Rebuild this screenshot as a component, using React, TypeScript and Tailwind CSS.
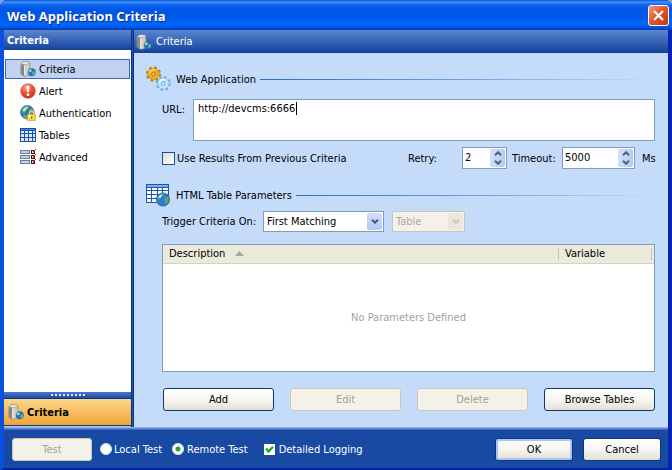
import { useState } from "react";
import type { ReactNode } from "react";
import clsx from "clsx";

/* ---------- icons ---------- */

function ServerIcon({ className }: { className?: string }) {
  return (
    <svg viewBox="0 0 16 16" className={className} aria-hidden="true">
      <path d="M.8 3 3 .8 8.600.5 10 2v12L4.500 15.500.8 13.200z" fill="#a3a29e" stroke="#77787a" strokeWidth=".5" />
      <path d="M1.200 3.500 4 4v11L1.200 13z" fill="#85868a" />
      <path d="M4.200 3.800 9.400 3v11l-5.200 1.200z" fill="#cfcdc6" />
      <path d="M1.600 3 3.500 1.300l4.900-.3 1 1.200-5.200.900z" fill="#f3f2ee" />
      <path d="M4.800 4.500v9.500" stroke="#f6f5f0" strokeWidth="1" />
      <circle cx="11.800" cy="11.300" r="3.700" fill="#2573bd" stroke="#1d5793" strokeWidth=".5" />
      <path d="M10 8.300c1.500-.5 2.300.2 1.600 1.200s-1.100 1-1.900 2.300L8.300 11c.1-1.300.7-2.200 1.700-2.700zM13 10.300l1.900.1c.5 1.700-.1 3.100-1.300 3.900-1-.4-1.600-1.300-1.300-2.300z" fill="#4fc08b" />
      <circle cx="10.500" cy="9.800" r="1.100" fill="#b5e8f5" />
    </svg>
  );
}

function AlertIcon() {
  return (
    <svg viewBox="0 0 16 16" className="size-4" aria-hidden="true">
      <defs>
        <radialGradient id="alert" cx=".4" cy=".25" r=".8">
          <stop offset="0" stopColor="#ffa88e" />
          <stop offset=".45" stopColor="#f05a38" />
          <stop offset="1" stopColor="#c9230d" />
        </radialGradient>
      </defs>
      <circle cx="8" cy="8" r="7.300" fill="url(#alert)" stroke="#d5583f" strokeWidth=".7" />
      <path d="M6.500 2.800h3L9 9.300H7z" fill="#fff" />
      <circle cx="8" cy="11.800" r="1.400" fill="#fff" />
    </svg>
  );
}

function AuthIcon() {
  return (
    <svg viewBox="0 0 16 16" className="size-4" aria-hidden="true">
      <circle cx="7.300" cy="7.300" r="6.800" fill="#2c74bd" stroke="#3b6d9f" strokeWidth=".7" />
      <path d="M3 3c2-2 4-2.300 6-1.600L8.300 3.500 5.600 5.500 5 8 2 7.500C1.400 6 2 4 3 3zM9 5l3-1.800c1.500 1.300 2 3 1.900 4.800L10 8.500zM4 10l3 .5.500 3c-2 0-3.500-1-4.500-2.300z" fill="#69b65c" />
      <path d="M2.500 5.500c1-2.300 3-3.500 5.500-3.500L5 6z" fill="#c9ecf7" />
      <path d="M9.300 9.500V8.200c0-2.800 4.400-2.800 4.400 0v1.300" fill="none" stroke="#d9d089" strokeWidth="1.300" />
      <path d="M7.600 9.300h7.800v6.200H7.600z" fill="#f6d743" stroke="#c7a32b" strokeWidth=".7" />
      <path d="M8.300 10h3v2.500h-3z" fill="#fff3a5" />
      <path d="M11 11.300h1.200v2.400H11z" fill="#8a6a12" />
    </svg>
  );
}

function TableIcon() {
  return (
    <svg viewBox="0 0 16 16" className="size-4" shapeRendering="crispEdges" aria-hidden="true">
      <path d="M0 1h16v14H0z" fill="#1d4fa5" />
      <path d="M1 2h14v1H1z" fill="#4d87dd" />
      <path d="M1 4h3v2H1zm4 0h3v2H5zm4 0h3v2H9zm4 0h2v2h-2zM1 7h3v3H1zm4 0h3v3H5zm4 0h3v3H9zm4 0h2v3h-2zM1 11h3v3H1zm4 0h3v3H5zm4 0h3v3H9zm4 0h2v3h-2z" fill="#d8e9fb" />
    </svg>
  );
}

function AdvancedIcon() {
  return (
    <svg viewBox="0 0 16 16" className="size-4" shapeRendering="crispEdges" aria-hidden="true">
      <path d="M0 1h10v4H0zm0 5h10v4H0zm0 5h10v4H0z" fill="#6d7f9e" />
      <path d="M1 2h8v2H1zm0 5h8v2H1zm0 5h8v2H1z" fill="#c3cfe2" />
      <path d="M11 1h4v4h-4zm0 5h4v4h-4zm0 5h4v4h-4z" fill="#37201d" />
      <path d="M12 2h2v2h-2zm0 5h2v2h-2zm0 5h2v2h-2z" fill="#f4cfc6" />
      <path d="M15 0h1v1h-1zm-1 1h1v1h-1zm-1 1h1v1h-1zm2 3h1v1h-1zm-1 1h1v1h-1zm-1 1h1v2h-1zm2 3h1v1h-1zm-1 1h1v1h-1zm-1 1h1v2h-1z" fill="#d9371f" />
    </svg>
  );
}

function GearsIcon() {
  return (
    <svg viewBox="0 0 26 26" className="size-[26px]" aria-hidden="true">
      <circle cx="7.500" cy="8" r="6.500" fill="none" stroke="#b9800f" strokeWidth="2.200" strokeDasharray="2.550 2.555" />
      <circle cx="7.500" cy="8" r="5.800" fill="#efab1e" stroke="#c2850f" strokeWidth=".6" />
      <path d="M3.500 7.500a4.300 4.300 0 0 1 6-3.500" fill="none" stroke="#ffdc7c" strokeWidth="1.300" />
      <circle cx="7.500" cy="8" r="1.700" fill="#dce6f2" stroke="#a8700c" />
      <circle cx="17.300" cy="17.500" r="6.400" fill="none" stroke="#6aaeea" strokeWidth="2.200" strokeDasharray="2.500 2.526" />
      <circle cx="17.300" cy="17.500" r="5.700" fill="#bfe3fc" stroke="#74b4ea" strokeWidth=".6" />
      <path d="M13.500 17a4 4 0 0 1 5.500-3.300" fill="none" stroke="#f3fbff" strokeWidth="1.300" />
      <circle cx="17.300" cy="17.500" r="1.700" fill="#e6f3ff" stroke="#5b9edb" />
    </svg>
  );
}

function WebTableIcon() {
  return (
    <svg viewBox="0 0 26 26" className="size-[26px]" aria-hidden="true">
      <g shapeRendering="crispEdges">
        <path d="M0 2h23v19H0z" fill="#1f56a9" />
        <path d="M1 3h21v2H1z" fill="#79aeea" />
        <path d="M1 6h4v2H1zm5 0h5v2H6zm6 0h4v2h-4zm5 0h5v2h-5zM1 9h4v3H1zm5 0h5v3H6zm6 0h4v3h-4zm5 0h5v3h-5zM1 13h4v3H1zm5 0h5v3H6zm6 0h4v3h-4zM1 17h4v3H1zm5 0h5v3H6z" fill="#f5faff" />
      </g>
      <circle cx="17" cy="17.500" r="6.600" fill="#2e7bd3" stroke="#2a5fa5" strokeWidth=".8" />
      <path d="M13 13.500c1.500-1.800 3.500-2.200 5-1.700l-1 2.200-2.500 1.500-.5 2.500-2.500-1c0-1.500.5-2.500 1.500-3.500zM18.500 15.500l3.500-.5c1 1.500 1 3 .3 4.800L20 22l-1.500-2.500z" fill="#58a86a" />
      <path d="M12 15.500c.8-2 2.500-3 4.500-3l-2 3.500z" fill="#bfe6f8" />
    </svg>
  );
}

function Chevron({ up }: { up?: boolean }) {
  return (
    <svg viewBox="0 0 8 5" className="h-[5px] w-2" aria-hidden="true">
      <path d={up ? "M1 4.200 4 1.300l3 2.900" : "M1 .8l3 2.900L7 .8"} fill="none" stroke="currentColor" strokeWidth="2" />
    </svg>
  );
}

/* ---------- controls ---------- */

interface ButtonProps {
  children: ReactNode;
  disabled?: boolean;
  isDefault?: boolean;
  className?: string;
}

function Button({ children, disabled, isDefault, className }: ButtonProps) {
  return (
    <button
      type="button"
      disabled={disabled}
      className={clsx(
        "h-[23px] rounded-[3px] border text-center",
        disabled
          ? "border-[#cbc8ba] bg-[#f4f2e8] text-[#a3a192]"
          : "border-[#0c3a70] bg-linear-to-b from-white via-[#f6f5f1] to-[#e3e0d6] text-black",
        isDefault && "shadow-[inset_0_0_0_2px_#a9c6f5]",
        className,
      )}
    >
      {children}
    </button>
  );
}

function SectionTitle({ icon, children }: { icon: ReactNode; children: ReactNode }) {
  return (
    <div className="flex h-[26px] items-center">
      {icon}
      <h2 className="ml-1">{children}</h2>
      <div className="ml-1 h-px flex-1 bg-linear-to-r from-[#2f6cc4] via-[#6d9ddd] to-[#c5dbfa]" />
    </div>
  );
}

function Spinner({ id, value, className }: { id: string; value: number; className?: string }) {
  const [current, setCurrent] = useState(value);
  const step = "flex h-[9px] w-full items-center justify-center";
  return (
    <div className={clsx("flex h-[22px] border border-[#7f9db9] bg-white p-px", className)}>
      <input
        id={id}
        type="text"
        inputMode="numeric"
        value={current}
        onChange={(e) => setCurrent(Number(e.target.value) || 0)}
        className="min-w-0 flex-1 pb-[2px] pl-px outline-none"
      />
      <div className="w-[15px] rounded-xs bg-linear-to-r from-[#d3e0fb] to-[#b5c9f3] text-[#4d6185]">
        <button type="button" aria-label="Increase" className={step} onClick={() => setCurrent(current + 1)}>
          <Chevron up />
        </button>
        <button type="button" aria-label="Decrease" className={step} onClick={() => setCurrent(current - 1)}>
          <Chevron />
        </button>
      </div>
    </div>
  );
}

interface SelectProps {
  label: string;
  id?: string;
  options: string[];
  disabled?: boolean;
  className?: string;
}

function Select({ label, id, options, disabled, className }: SelectProps) {
  return (
    <div className={clsx("relative h-[21px]", className)}>
      <select
        id={id}
        aria-label={label}
        disabled={disabled}
        className={clsx(
          "size-full appearance-none border pl-[3px] opacity-100 outline-none",
          disabled ? "border-[#c9c7ba] bg-[#f4f2e8] text-[#aca899]" : "border-[#7f9db9] bg-white text-black",
        )}
      >
        {options.map((o) => (
          <option key={o}>{o}</option>
        ))}
      </select>
      <span
        className={clsx(
          "pointer-events-none absolute inset-y-[2px] right-[2px] flex w-[15px] items-center justify-center rounded-xs",
          disabled ? "bg-[#eae8dc] text-[#c5c3b5]" : "bg-linear-to-b from-[#cfddfb] to-[#b3c8f4] text-[#3f567f]",
        )}
      >
        <Chevron />
      </span>
    </div>
  );
}

/* ---------- page ---------- */

const NAV = [
  { label: "Criteria", icon: <ServerIcon className="size-4" /> },
  { label: "Alert", icon: <AlertIcon /> },
  { label: "Authentication", icon: <AuthIcon /> },
  { label: "Tables", icon: <TableIcon /> },
  { label: "Advanced", icon: <AdvancedIcon /> },
];

function TitleBar() {
  return (
    <header className="flex h-[30px] items-center justify-between bg-[linear-gradient(#0a4fd0_0,#3f93ff_2px,#0b62ee_5px,#0055e5_9px,#0058ea_16px,#0166fb_25px,#0050d8_28px,#0a34a6_30px)] pr-[3px] pl-[7px]">
      <h1 className="pt-[2px] font-['Open_Sans',sans-serif] text-[13px] font-bold text-white [text-shadow:1px_1px_#0a2f8c]">
        Web Application Criteria
      </h1>
      <button
        type="button"
        aria-label="Close"
        className="flex size-[21px] items-center justify-center rounded-[3px] border border-white bg-linear-to-br from-[#f0977a] via-[#e0502c] to-[#c23a13]"
      >
        <svg viewBox="0 0 13 13" className="size-[13px]" aria-hidden="true">
          <path d="m2 2 9 9m0-9-9 9" stroke="#fff" strokeWidth="2.200" />
        </svg>
      </button>
    </header>
  );
}

function Sidebar() {
  const [active, setActive] = useState("Criteria");
  return (
    <aside className="flex w-[127px] flex-col">
      <h2 className="flex h-5 items-center bg-linear-to-b from-[#5b86d2] to-[#12429b] pl-[3px] font-bold text-white">
        Criteria
      </h2>
      <nav className="flex flex-1 flex-col gap-[2px] bg-white px-px pt-[9px]">
        {NAV.map((item) => (
          <button
            key={item.label}
            type="button"
            onClick={() => setActive(item.label)}
            className={clsx(
              "flex h-5 items-center gap-[3px] border pl-[14px]",
              active === item.label ? "border-[#3b66ba] bg-[#c2d2ee]" : "border-transparent",
            )}
          >
            {item.icon}
            {item.label}
          </button>
        ))}
      </nav>
      <div className="flex h-[7px] items-center justify-center gap-[2px] border-b border-[#0b3285] bg-linear-to-b from-[#4a78cb] to-[#1d4ca6]">
        {Array.from({ length: 9 }, (_, i) => (
          <span key={i} className="size-[2px] bg-[#dfe9fb]" />
        ))}
      </div>
      <button
        type="button"
        className="flex h-[26px] items-center gap-[3px] bg-linear-to-b from-[#fcd787] to-[#f0a32b] pl-1 font-bold"
      >
        <ServerIcon className="size-4" />
        Criteria
      </button>
      <div className="h-px bg-[#0b3285]" />
      <div className="h-px bg-[#a9c6f5]" />
    </aside>
  );
}

function CriteriaPanel() {
  return (
    <main className="flex min-w-0 flex-1 flex-col bg-[#c5dbfa]">
      <div className="flex h-[23px] items-center gap-1 bg-linear-to-b from-[#5b86d2] to-[#12429b] pl-[2px] text-white">
        <ServerIcon className="size-4" />
        Criteria
      </div>

      <div className="flex flex-1 flex-col pt-[13px] pr-[13px] pb-4 pl-3">
        <SectionTitle icon={<GearsIcon />}>Web Application</SectionTitle>

        <div className="mt-[7px] ml-4 flex">
          <label htmlFor="url" className="w-[31px] pt-1">URL:</label>
          <div className="relative h-[42px] flex-1">
            <textarea
              id="url"
              defaultValue="http://devcms:6666"
              className="block size-full resize-none border border-[#7f9db9] bg-white px-1 py-[2px] outline-none"
            />
            {/* text caret */}
            <span className="absolute top-[3px] left-[103px] h-[13px] w-px bg-black" />
          </div>
        </div>

        <div className="mt-[6px] ml-4 flex items-center">
          <label className="flex items-center gap-[2px]">
            <input
              type="checkbox"
              className="size-[13px] appearance-none border border-[#1c5180] bg-linear-to-br from-[#dcdcd7] to-white checked:bg-[#21a121]"
            />
            Use Results From Previous Criteria
          </label>
          <label htmlFor="retry" className="ml-auto w-[54px]">Retry:</label>
          <Spinner id="retry" value={2} className="w-[45px]" />
          <label htmlFor="timeout" className="ml-[5px] w-[50px]">Timeout:</label>
          <Spinner id="timeout" value={5000} className="w-[73px]" />
          <span className="w-5 pl-[7px]">Ms</span>
        </div>

        <div className="mt-[13px]">
          <SectionTitle icon={<WebTableIcon />}>HTML Table Parameters</SectionTitle>
        </div>

        <div className="mt-[3px] ml-4 flex items-center">
          <label htmlFor="trigger" className="w-[101px]">Trigger Criteria On:</label>
          <Select
            id="trigger"
            label="Trigger Criteria On"
            options={["First Matching", "All Matching"]}
            className="w-[121px]"
          />
          <Select label="Trigger target" options={["Table", "Row"]} disabled className="ml-2 w-[73px]" />
        </div>

        <div className="mt-3 ml-4 flex flex-1 flex-col border border-[#7f9db9] bg-white">
          <table className="w-full table-fixed">
            <thead>
              <tr className="h-[18px] border-b border-[#d6d2c2] bg-[#ebeadb]">
                <th className="pl-[6px] text-left font-normal">
                  <span className="flex items-center gap-[10px]">
                    Description
                    <svg viewBox="0 0 9 5" className="h-[5px] w-[9px]" aria-hidden="true">
                      <path d="M0 5 4.500 0 9 5z" fill="#aca899" />
                    </svg>
                  </span>
                </th>
                <th className="w-[96px] text-left font-normal">
                  <span className="mr-[2px] flex h-3 items-center border-x border-[#c7c5b2] pl-[6px]">Variable</span>
                </th>
              </tr>
            </thead>
          </table>
          <p className="flex flex-1 items-center justify-center text-[#9f9f9f]">No Parameters Defined</p>
        </div>

        <div className="mt-4 ml-[17px] flex justify-between">
          <Button className="w-[111px]">Add</Button>
          <Button className="w-[111px]" disabled>Edit</Button>
          <Button className="w-[111px]" disabled>Delete</Button>
          <Button className="w-[111px]">Browse Tables</Button>
        </div>
      </div>
    </main>
  );
}

function Footer() {
  const [mode, setMode] = useState("remote");
  const radio =
    "size-3 appearance-none rounded-full border border-[#d5e2f0] bg-white checked:bg-[radial-gradient(circle,#2f9e2f_0,#2f9e2f_2px,#fff_3px)]";
  return (
    <footer className="flex h-[38px] items-center bg-[#184aa3] pr-[7px] pl-2 text-white">
      <Button className="w-20" disabled>Test</Button>
      <label className="ml-2 flex items-center gap-[2px]">
        <input type="radio" name="mode" className={radio} checked={mode === "local"} onChange={() => setMode("local")} />
        Local Test
      </label>
      <label className="ml-[10px] flex items-center gap-[3px]">
        <input type="radio" name="mode" className={radio} checked={mode === "remote"} onChange={() => setMode("remote")} />
        Remote Test
      </label>
      <label className="ml-4 flex items-center gap-1">
        <span className="relative size-[11px]">
          <input type="checkbox" defaultChecked className="peer block size-full appearance-none bg-white" />
          <svg
            viewBox="0 0 11 11"
            className="pointer-events-none absolute inset-0 hidden peer-checked:block"
            aria-hidden="true"
          >
            <path d="m2 4.500 2.500 3L9 2.800" fill="none" stroke="#21a121" strokeWidth="2.200" />
          </svg>
        </span>
        Detailed Logging
      </label>
      <Button className="ml-auto w-[78px]" isDefault>OK</Button>
      <Button className="ml-[10px] w-[78px]">Cancel</Button>
    </footer>
  );
}

export default function App() {
  return (
    <div className="min-h-screen bg-[#8f9fdc] font-['DejaVu_Sans_Condensed','DejaVu_Sans',sans-serif] text-[11px] leading-[13px] text-black">
      <div className="flex min-h-screen flex-col overflow-hidden rounded-t-[7px] bg-[#0b2fc4]">
        <TitleBar />
        <div className="flex flex-1 flex-col border-x-4 border-b-2 border-l-[#0a50e0] border-r-[#0623b4] border-b-[#0420a8]">
          <div className="flex flex-1">
            <Sidebar />
            <div className="w-[3px] border-x border-[#0b3285] bg-[#1d55b5]" />
            <CriteriaPanel />
          </div>
          <div className="h-[3px] bg-linear-to-b from-[#a3c0ec] to-[#2a58ac]" />
          <Footer />
        </div>
      </div>
    </div>
  );
}
